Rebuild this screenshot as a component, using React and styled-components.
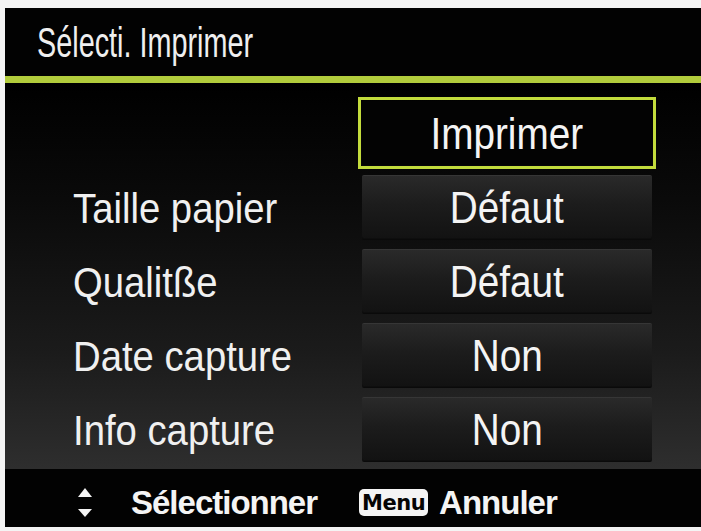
import React from "react";
import styled, { createGlobalStyle } from "styled-components";

const Global = createGlobalStyle`
  html, body { margin: 0; padding: 0; background: #ffffff; }
  body { width: 701px; height: 531px; overflow: hidden; }
`;

const FONT = `"Liberation Sans", Arial, sans-serif`;

const Frame = styled.div`
  width: 701px;
  height: 531px;
  box-sizing: border-box;
  padding: 8px 0 4px 5px;
  background: #f4f4f4;
`;

const Screen = styled.div`
  height: 100%;
  display: flex;
  flex-direction: column;
  background: #000;
  font-family: ${FONT};
  color: #f2f2f2;
`;

const Header = styled.div`
  height: 68px;
  display: flex;
  align-items: center;
  padding-left: 32px;
  background: #020202;
  border-bottom: 7px solid #b2cc3c;
  box-sizing: content-box;
`;

/* Condensed look of the camera's UI font */
const Squeeze = styled.span`
  display: inline-block;
  white-space: nowrap;
  transform: scaleX(${(p) => p.$x});
  transform-origin: ${(p) => p.$origin || "left"} center;
`;

const Title = styled.h1`
  margin: 0;
  font-weight: 400;
  font-size: 43px;
  line-height: 1;
  color: #efefef;
`;

const Content = styled.div`
  flex: 1;
  display: grid;
  grid-template-columns: 1fr 290px;
  grid-auto-rows: 64px;
  row-gap: 10px;
  align-items: center;
  padding: 18px 49px 0 68px;
  background: linear-gradient(180deg, #000000 0%, #0a0a0a 30%, #1b1b1b 70%, #2e2e2e 100%);
`;

const Label = styled.div`
  font-size: 43px;
  line-height: 1;
  color: #f0f0f0;
  padding-top: 3px;
`;

const Value = styled.div`
  grid-column: 2;
  height: 64px;
  display: flex;
  align-items: center;
  justify-content: center;
  font-size: 44px;
  line-height: 1;
  color: #f4f4f4;
  border-radius: ${(p) => (p.$selected ? 0 : 2)}px;
  box-sizing: border-box;
  border-top: 1px solid ${(p) => (p.$selected ? "transparent" : "#363636")};
  background: ${(p) =>
    p.$selected
      ? "#030303"
      : "linear-gradient(180deg, #2a2a2a 0%, #1c1c1c 45%, #121212 100%)"};
  outline: ${(p) => (p.$selected ? "3px solid #c3dc3c" : "none")};
  outline-offset: 1px;
  box-shadow: ${(p) => (p.$selected ? "none" : "0 1px 0 #0a0a0a, inset 0 -1px 0 #0e0e0e")};
`;

const Footer = styled.div`
  height: 58px;
  box-sizing: border-box;
  padding: 9px 0 0 73px;
  display: flex;
  align-items: center;
  background: #020202;
  font-weight: 700;
  font-size: 33px;
`;

const Hint = styled.div`
  display: flex;
  align-items: center;
  margin-right: ${(p) => p.$gap || 0}px;
`;

const HintText = styled.span`
  color: #f4f4f4;
  letter-spacing: -1px;
`;

const MenuBadge = styled.span`
  display: inline-flex;
  align-items: center;
  justify-content: center;
  width: 69px;
  height: 27px;
  margin-right: 11px;
  border-radius: 5px;
  background: #f4f4f4;
  color: #050505;
  font-family: "DejaVu Sans", sans-serif;
  font-weight: 700;
  font-size: 21px;
  letter-spacing: -0.5px;
`;

const ArrowsIcon = () => (
  <svg width="18" height="31" viewBox="0 0 18 31" style={{ marginRight: 37, marginLeft: -2 }}>
    <path d="M9 1 L16 10 L2 10 Z" fill="#f4f4f4" />
    <path d="M9 30 L16 22 L2 22 Z" fill="#f4f4f4" />
  </svg>
);

const rows = [
  { label: "", value: "Imprimer", selected: true },
  { label: "Taille papier", value: "Défaut" },
  { label: "Qualitße", value: "Défaut" },
  { label: "Date capture", value: "Non" },
  { label: "Info capture", value: "Non" },
];

export default function App() {
  return (
    <>
      <Global />
      <Frame>
        <Screen>
          <Header>
            <Title>
              <Squeeze $x={0.67}>Sélecti. Imprimer</Squeeze>
            </Title>
          </Header>
          <Content>
            {rows.map((r, i) => (
              <React.Fragment key={i}>
                <Label>
                  <Squeeze $x={0.89}>{r.label}</Squeeze>
                </Label>
                <Value $selected={r.selected}>
                  <Squeeze $x={0.88} $origin="center">{r.value}</Squeeze>
                </Value>
              </React.Fragment>
            ))}
          </Content>
          <Footer>
            <Hint $gap={42}>
              <ArrowsIcon />
              <HintText>Sélectionner</HintText>
            </Hint>
            <Hint>
              <MenuBadge>Menu</MenuBadge>
              <HintText>Annuler</HintText>
            </Hint>
          </Footer>
        </Screen>
      </Frame>
    </>
  );
}
